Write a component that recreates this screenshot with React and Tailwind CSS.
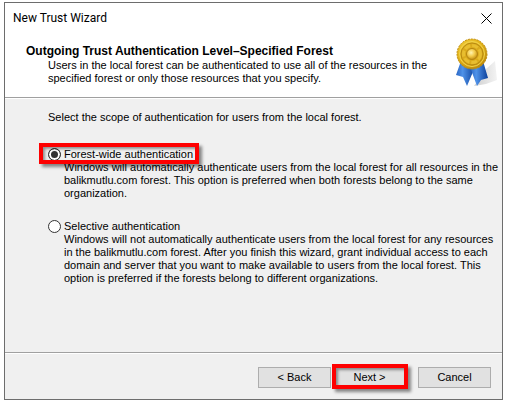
import React, { useState } from "react";

const options = [
  {
    id: "forest-wide",
    label: "Forest-wide authentication",
    lines: [
      "Windows will automatically authenticate users from the local forest for all resources in the",
      "balikmutlu.com forest. This option is preferred when both forests belong to the same",
      "organization.",
    ],
    marked: true,
  },
  {
    id: "selective",
    label: "Selective authentication",
    lines: [
      "Windows will not automatically authenticate users from the local forest for any resources",
      "in the balikmutlu.com forest. After you finish this wizard, grant individual access to each",
      "domain and server that you want to make available to users from the local forest. This",
      "option is preferred if the forests belong to different organizations.",
    ],
    marked: false,
  },
];

const Medal = () => (
  <svg width="44" height="50" viewBox="0 0 44 50" aria-hidden="true">
    <defs>
      <radialGradient id="gold" cx="40%" cy="35%" r="70%">
        <stop offset="0" stopColor="#f7d84a" />
        <stop offset="0.6" stopColor="#e3b41c" />
        <stop offset="1" stopColor="#b98508" />
      </radialGradient>
      <radialGradient id="boss" cx="42%" cy="38%" r="65%">
        <stop offset="0" stopColor="#fff3b0" />
        <stop offset="0.5" stopColor="#f3cc4c" />
        <stop offset="1" stopColor="#c08a10" />
      </radialGradient>
      <linearGradient id="ribbon" x1="0" y1="0" x2="1" y2="0">
        <stop offset="0" stopColor="#2a66c4" />
        <stop offset="0.35" stopColor="#4f92e8" />
        <stop offset="1" stopColor="#0b3f9a" />
      </linearGradient>
      <linearGradient id="shade" x1="0" y1="0" x2="1" y2="0">
        <stop offset="0" stopColor="#cfcfcf" />
        <stop offset="1" stopColor="#f3f3f3" />
      </linearGradient>
    </defs>
    <path d="M18 48 L30 31 L39 23 L41 42 L30 46 Z" fill="url(#shade)" />
    <path d="M5 23 L0 37 L7 39 L11 48 L19 29 Z" fill="url(#ribbon)" />
    <path d="M14 29 L21 48 L25 42 L32 40 L27 23 Z" fill="url(#ribbon)" />
    <circle cx="16" cy="16" r="15" fill="url(#gold)" stroke="#c18f10" strokeWidth="1" strokeDasharray="2 1" />
    <circle cx="16" cy="16" r="12.5" fill="none" stroke="#f2d34c" strokeWidth="1" />
    <circle cx="16" cy="16" r="11" fill="#dbab1c" stroke="#b88a12" strokeWidth="1" />
    <circle cx="16" cy="16" r="8.5" fill="none" stroke="#e8be30" strokeWidth="3" strokeDasharray="6 2" />
    <circle cx="16" cy="16" r="5.5" fill="url(#boss)" stroke="#b58510" strokeWidth="1" />
  </svg>
);

const Marker = ({ className }) => (
  <span
    aria-hidden="true"
    className={`pointer-events-none absolute z-10 border-4 border-[#fe0000] shadow-[3px_3px_3px_rgba(0,0,0,0.45),inset_2px_2px_3px_rgba(0,0,0,0.4)] ${className}`}
  />
);

const WizardButton = ({ children, primary }) => (
  <button
    type="button"
    className={`h-[21px] w-[73px] border bg-[#e1e1e1] text-center leading-[13px] ${primary ? "border-[#0078d7]" : "border-[#adadad]"}`}
  >
    {children}
  </button>
);

const App = () => {
  const [selected, setSelected] = useState("forest-wide");

  return (
    <div className="bg-white px-1 pt-0.5 font-['Liberation_Sans',Arial,sans-serif] text-[11px] leading-[13px] text-black">
      <div className="border border-[#6d6d6d] bg-[#f0f0f0]">
        <header className="bg-white">
          <div className="flex h-[31px] items-center justify-between pl-2 pr-[10px]">
            <span className="font-[Roboto,'Segoe_UI',sans-serif] text-[12px]">New Trust Wizard</span>
            <button type="button" aria-label="Close">
              <svg width="11" height="11" viewBox="0 0 11 11" stroke="#000" strokeWidth="1">
                <path d="M0.5 0.5 L10.5 10.5 M10.5 0.5 L0.5 10.5" />
              </svg>
            </button>
          </div>
          <div className="flex h-16 justify-between border-b border-[#a0a0a0] pl-[21px] pr-0.5">
            <div className="pt-[10px]">
              <h1 className="text-[12px] font-bold leading-[15px]">
                Outgoing Trust Authentication Level–Specified Forest
              </h1>
              <p className="pl-[22px]">
                Users in the local forest can be authenticated to use all of the resources in the
                <br />
                specified forest or only those resources that you specify.
              </p>
            </div>
            <div className="shrink-0 pt-1">
              <Medal />
            </div>
          </div>
        </header>

        <main className="border-t border-white pb-[67px] pl-[43px] pt-3">
          <p>Select the scope of authentication for users from the local forest.</p>
          <div className="flex flex-col gap-5 pt-6">
            {options.map((option) => (
              <div key={option.id}>
                <div className="relative flex items-center gap-[3px]">
                  <input
                    type="radio"
                    id={option.id}
                    name="scope"
                    checked={selected === option.id}
                    onChange={() => setSelected(option.id)}
                    className="size-[13px] appearance-none rounded-full border border-[#333] bg-white checked:bg-[#333] checked:shadow-[inset_0_0_0_2px_#fff]"
                  />
                  <label htmlFor={option.id}>{option.label}</label>
                  {option.marked && <Marker className="-left-[9px] -top-[5px] h-[21px] w-40" />}
                </div>
                <p className="pl-4">
                  {option.lines.map((line) => (
                    <span key={line} className="block">{line}</span>
                  ))}
                </p>
              </div>
            ))}
          </div>
        </main>

        <footer className="border-t border-[#a0a0a0]">
          <div className="flex justify-end border-t border-white pb-[11px] pr-[11px] pt-[13px]">
            <WizardButton>&lt; Back</WizardButton>
            <div className="relative ml-0.5 mr-3 flex">
              <WizardButton primary>Next &gt;</WizardButton>
              <Marker className="-left-px -top-[3px] h-[25px] w-[76px]" />
            </div>
            <WizardButton>Cancel</WizardButton>
          </div>
        </footer>
      </div>
    </div>
  );
};

export default App;
